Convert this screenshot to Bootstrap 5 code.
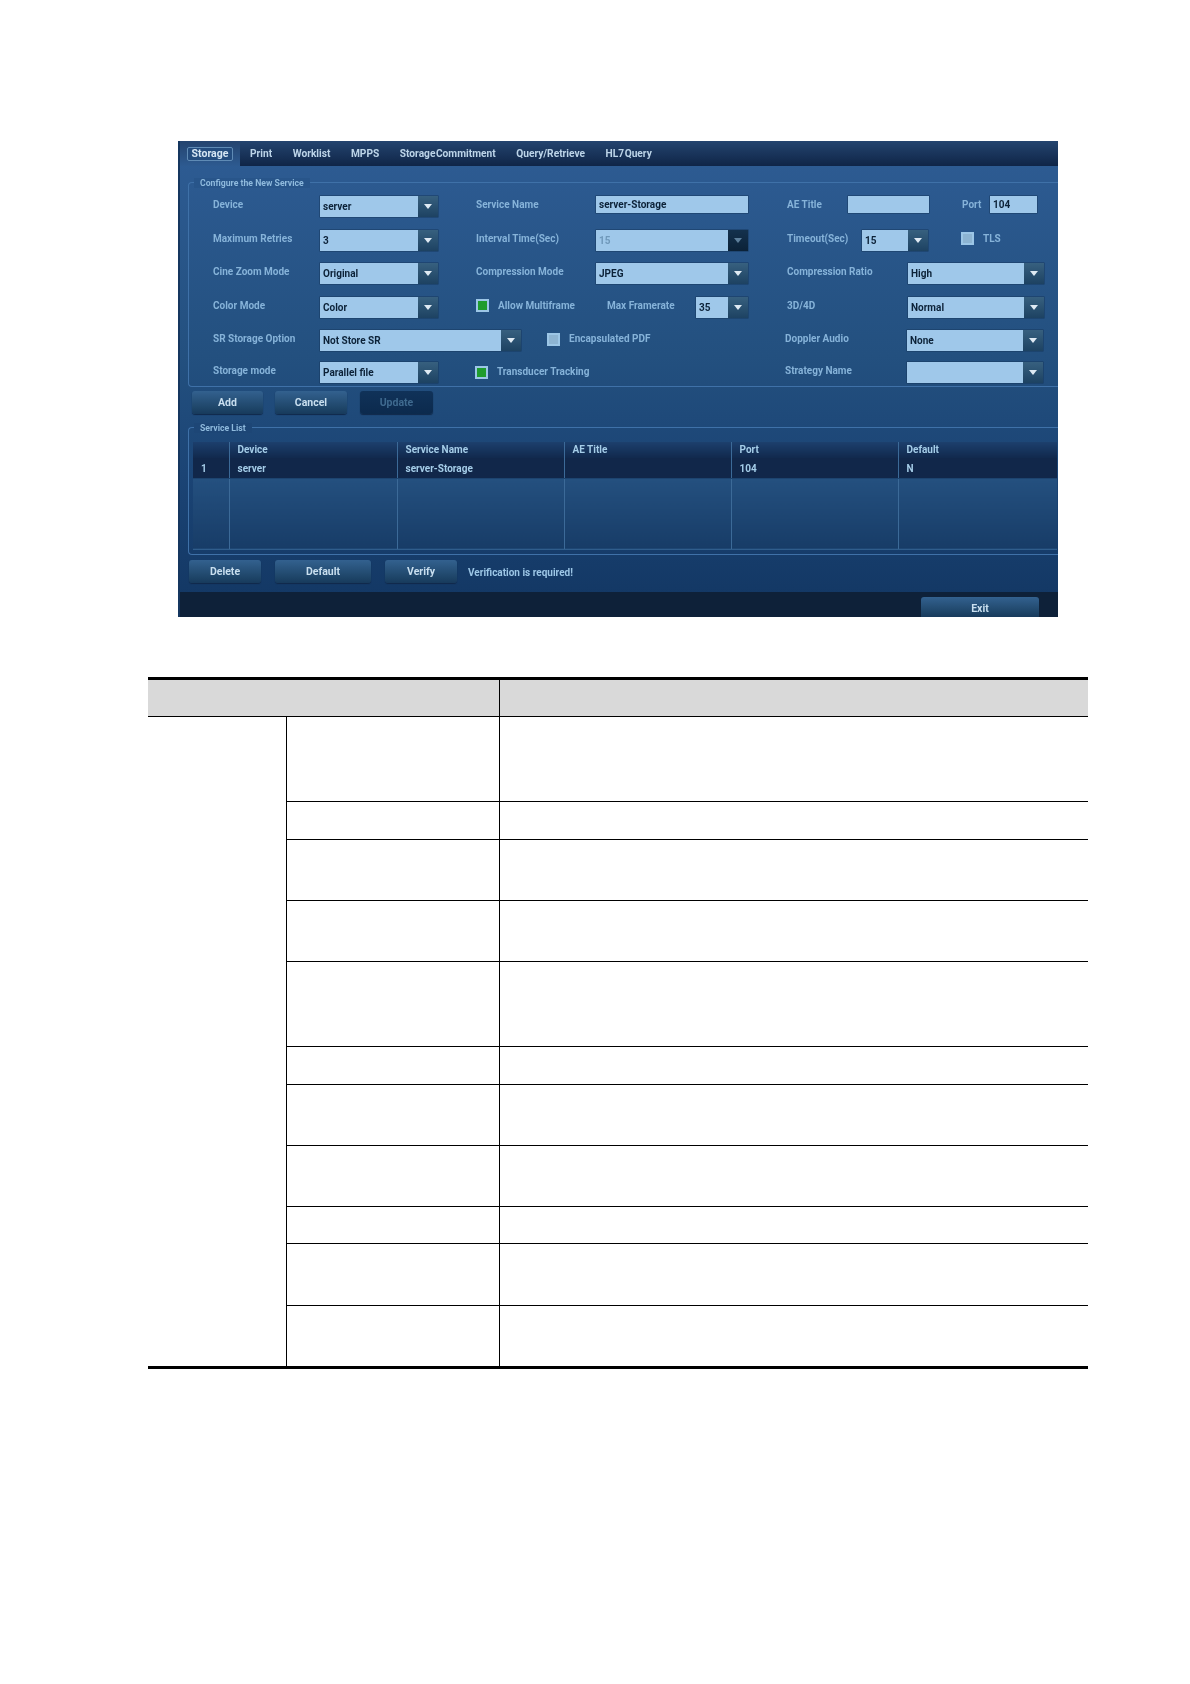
<!DOCTYPE html>
<html lang="en">
<head>
<meta charset="utf-8">
<title>Storage service settings</title>
<link rel="stylesheet" href="https://cdn.jsdelivr.net/npm/bootstrap@5.3.0/dist/css/bootstrap.min.css">
<style>
body{background:#fff;margin:0}
.sheet{padding-top:141px;padding-bottom:60px}
.scr{width:880px;height:476px;margin-left:178px;overflow:hidden;background:linear-gradient(#2e5c94 0,#23507f 45%,#1b4475 70%,#123662 100%);border-left:2px solid #15365f;font-family:"Roboto","Liberation Sans",sans-serif;font-weight:700;font-size:10px;color:#86b3d9;filter:blur(.45px);line-height:1.2}
.tabbar{height:25px;background:linear-gradient(#24446f,#0f2547);align-items:stretch}
.tabcell{width:60px;margin-right:10px;padding-left:7px;display:flex;align-items:center;background:linear-gradient(#24446f,#2d5a90)}
.tab-on{width:46px;height:14px;display:flex;align-items:center;justify-content:center;border:1px solid #5f8bb5;border-radius:2px;color:#d5e6f4;background:#234c7e;font-size:10.5px;padding-top:1px}
.tabtx{color:#bcd4e8;margin-right:20.5px;white-space:nowrap;font-size:10.2px;align-self:center;padding-top:2px;word-spacing:-2px;flex:none}
.gbox{position:relative;margin-left:8px;border:1px solid #3f71a8;border-right:0;border-radius:4px 0 0 4px}
.gbox-a{margin-top:16px;height:205px;padding:13px 0 0 24px}
.gbox-b{margin-top:13px;height:128px;padding:14px 0 0 4px}
.gtitle{position:absolute;top:-5px;left:5px;padding:0 6px;background:#28558a;font-size:8.7px;color:#8fbadd}
.gbox-b .gtitle{background:#1d4676}
.frow{height:21px;margin-bottom:12.5px;align-items:center}
.frow-last{margin-top:-1.5px;margin-bottom:0}
.lb{padding-bottom:3px;white-space:nowrap;flex:none}
.lb.tt{padding-bottom:1px}
.cmb{height:21px;background:#9fc8ea;color:#0c2238;flex:none;align-items:center;padding-left:3px;white-space:nowrap;box-shadow:0 0 0 .5px #16385f}
.cmb-tx{flex:1 1 auto;padding-top:1px}
.arr{width:20px;height:21px;flex:none;background:linear-gradient(#37607f,#1d4262);display:flex;align-items:center;justify-content:center}
.arr-off{background:linear-gradient(#14314d,#0b2238)}
.is-off{color:#6f98ba}
.ent{height:17px;align-self:flex-start}
.form-check-input.tick{width:13px;height:13px;margin:0 0 3px;flex:none;border-radius:0;border:2px solid #9cc6e6;background:#8db4d2;background-image:none}
.form-check-input.tick:checked{background:#1f9c2e;background-image:none;border-color:#9cc6e6}
.form-check-input.tick.gap37{margin:0 0 1px 37px}
.form-check-input.tick.gap38{margin-left:38px}
.w26{width:26px}.w33{width:33px}.w28{width:28px}.w47{width:47px}.w52{width:52px}.w61{width:61px}.w66{width:66px}.w75{width:75px}.w81{width:81px}.w89{width:89px}.w107{width:107px}.w118{width:118px}.w120{width:120px}.w121{width:121px}.w122{width:122px}.w136{width:136px}.w152{width:152px}.w201{width:201px}
.ml9{margin-left:9px}.ml38{margin-left:38px}.ml39{margin-left:39px}
.to607{width:109px}.to785a{width:216px}.to785b{width:288px}
.skbtn{padding:0;border:0;height:23px;border-radius:3px;font-size:10.5px;font-weight:700;line-height:22px;color:#c9dfef;background:linear-gradient(#33618f,#1e4568 75%,#173a5c);box-shadow:0 1px 1px #10294a}
.skbtn:disabled{opacity:1;background:linear-gradient(#103259,#0c2a4d);color:#3f6a8f;border:0}
.acts{margin:4px 0 0 12px;gap:12px}
.acts .skbtn:disabled{margin-left:1px}
.bw71{width:71px}.bw72{width:72px}.bw73{width:73px}.bw96{width:96px}.bw118{width:118px}
.cw36{width:36px}.cw168{width:168px}.cw167{width:167px}
.svc.table{--bs-table-bg:transparent;--bs-table-color:#a5cde8;--bs-table-border-color:transparent;margin:0;width:864px;table-layout:fixed;color:#a5cde8}
.svc.table>:not(caption)>*>*{padding:0 0 0 8px;border-bottom:0;border-right:1px solid #3c6a98;box-shadow:none;background:transparent;color:#a5cde8;font-size:10px;vertical-align:middle}
.svc.table>:not(caption)>*>*:last-child{border-right:0}
.svc.table thead th{height:16px;background:linear-gradient(#1c3f6d,#11294d);font-weight:700}
.svc.table tbody tr.sel td{height:20px;padding-top:2px;background:#11274a;border-bottom:1px solid #1d4470;font-weight:700}
.svc.table tbody tr.fill td{height:71px;background:linear-gradient(#24507f,#173c67);border-bottom:1px solid #2f5d8c}
.foot{margin:5px 0 0 9px;gap:14px;align-items:center}
.note{margin:2px 0 0 -3px;color:#9cc6e6}
.endbar{height:25px;margin-top:9px;background:#0e2139;padding:5px 19px 0 0;justify-content:flex-end}
.endbar .skbtn{height:20px;line-height:24px;display:block;border-radius:3px 3px 0 0;box-shadow:none}
.doc.table{width:940px;margin:60px 0 0 148px;table-layout:fixed;--bs-table-border-color:#000;border-top:3px solid #000;border-bottom:3px solid #000;border-collapse:collapse}
.doc.table>:not(caption)>*>*{padding:0;border-bottom:1px solid #000;border-left:0;border-right:0;box-shadow:none}
.doc.table thead th{background:#d9d9d9;height:38px}
.dc1{width:138px}.dc2{width:213px}
.doc.table .vl{border-right:1px solid #000}
.doc.table .ha{height:85px}.doc.table .hb{height:38px}.doc.table .hc{height:61px}.doc.table .hd{height:62px}.doc.table .he{height:37px}
.doc.table>tbody>tr:last-child>*{border-bottom:0}
</style>
</head>
<body>
<div class="sheet">
  <section class="scr">
    <div class="tabbar d-flex">
      <div class="tabcell"><span class="tab-on">Storage</span></div>
      <span class="tabtx">Print</span><span class="tabtx">Worklist</span><span class="tabtx">MPPS</span><span class="tabtx">Storage Commitment</span><span class="tabtx">Query/Retrieve</span><span class="tabtx">HL7 Query</span>
    </div>

    <div class="gbox gbox-a">
      <span class="gtitle">Configure the New Service</span>

      <div class="frow d-flex">
        <span class="lb w107">Device</span>
        <div class="cmb d-flex w118"><span class="cmb-tx">server</span><span class="arr"><svg width="8" height="5" viewBox="0 0 10 6"><path d="M0 0h10L5 6z" fill="#dfeaf3"/></svg></span></div>
        <span class="lb w120 ml38">Service Name</span>
        <div class="cmb d-flex w152 ent"><span class="cmb-tx">server-Storage</span></div>
        <span class="lb w61 ml39">AE Title</span>
        <div class="cmb d-flex w81 ent"></div>
        <span class="w33"></span>
        <span class="lb w28">Port</span>
        <div class="cmb d-flex w47 ent"><span class="cmb-tx">104</span></div>
      </div>

      <div class="frow d-flex">
        <span class="lb w107">Maximum Retries</span>
        <div class="cmb d-flex w118"><span class="cmb-tx">3</span><span class="arr"><svg width="8" height="5" viewBox="0 0 10 6"><path d="M0 0h10L5 6z" fill="#dfeaf3"/></svg></span></div>
        <span class="lb w120 ml38">Interval Time(Sec)</span>
        <div class="cmb d-flex w152 is-off"><span class="cmb-tx">15</span><span class="arr arr-off"><svg width="8" height="5" viewBox="0 0 10 6"><path d="M0 0h10L5 6z" fill="#5d7f9b"/></svg></span></div>
        <span class="lb w75 ml39">Timeout(Sec)</span>
        <div class="cmb d-flex w66"><span class="cmb-tx">15</span><span class="arr"><svg width="8" height="5" viewBox="0 0 10 6"><path d="M0 0h10L5 6z" fill="#dfeaf3"/></svg></span></div>
        <span class="w33"></span>
        <input class="form-check-input tick" type="checkbox" aria-label="TLS">
        <span class="lb ml9">TLS</span>
      </div>

      <div class="frow d-flex">
        <span class="lb w107">Cine Zoom Mode</span>
        <div class="cmb d-flex w118"><span class="cmb-tx">Original</span><span class="arr"><svg width="8" height="5" viewBox="0 0 10 6"><path d="M0 0h10L5 6z" fill="#dfeaf3"/></svg></span></div>
        <span class="lb w120 ml38">Compression Mode</span>
        <div class="cmb d-flex w152"><span class="cmb-tx">JPEG</span><span class="arr"><svg width="8" height="5" viewBox="0 0 10 6"><path d="M0 0h10L5 6z" fill="#dfeaf3"/></svg></span></div>
        <span class="lb w121 ml39">Compression Ratio</span>
        <div class="cmb d-flex w136"><span class="cmb-tx">High</span><span class="arr"><svg width="8" height="5" viewBox="0 0 10 6"><path d="M0 0h10L5 6z" fill="#dfeaf3"/></svg></span></div>
      </div>

      <div class="frow d-flex">
        <span class="lb w107">Color Mode</span>
        <div class="cmb d-flex w118"><span class="cmb-tx">Color</span><span class="arr"><svg width="8" height="5" viewBox="0 0 10 6"><path d="M0 0h10L5 6z" fill="#dfeaf3"/></svg></span></div>
        <input class="form-check-input tick gap38" type="checkbox" checked aria-label="Allow Multiframe">
        <span class="lb to607 ml9">Allow Multiframe</span>
        <span class="lb w89">Max Framerate</span>
        <div class="cmb d-flex w52"><span class="cmb-tx">35</span><span class="arr"><svg width="8" height="5" viewBox="0 0 10 6"><path d="M0 0h10L5 6z" fill="#dfeaf3"/></svg></span></div>
        <span class="lb w121 ml39">3D/4D</span>
        <div class="cmb d-flex w136"><span class="cmb-tx">Normal</span><span class="arr"><svg width="8" height="5" viewBox="0 0 10 6"><path d="M0 0h10L5 6z" fill="#dfeaf3"/></svg></span></div>
      </div>

      <div class="frow d-flex">
        <span class="lb w107">SR Storage Option</span>
        <div class="cmb d-flex w201"><span class="cmb-tx">Not Store SR</span><span class="arr"><svg width="8" height="5" viewBox="0 0 10 6"><path d="M0 0h10L5 6z" fill="#dfeaf3"/></svg></span></div>
        <span class="w26"></span>
        <input class="form-check-input tick" type="checkbox" aria-label="Encapsulated PDF">
        <span class="lb to785a ml9">Encapsulated PDF</span>
        <span class="lb w122">Doppler Audio</span>
        <div class="cmb d-flex w136"><span class="cmb-tx">None</span><span class="arr"><svg width="8" height="5" viewBox="0 0 10 6"><path d="M0 0h10L5 6z" fill="#dfeaf3"/></svg></span></div>
      </div>

      <div class="frow frow-last d-flex">
        <span class="lb w107">Storage mode</span>
        <div class="cmb d-flex w118"><span class="cmb-tx">Parallel file</span><span class="arr"><svg width="8" height="5" viewBox="0 0 10 6"><path d="M0 0h10L5 6z" fill="#dfeaf3"/></svg></span></div>
        <input class="form-check-input tick gap37" type="checkbox" checked aria-label="Transducer Tracking">
        <span class="lb tt to785b ml9">Transducer Tracking</span>
        <span class="lb w122">Strategy Name</span>
        <div class="cmb d-flex w136"><span class="cmb-tx"></span><span class="arr"><svg width="8" height="5" viewBox="0 0 10 6"><path d="M0 0h10L5 6z" fill="#dfeaf3"/></svg></span></div>
      </div>
    </div>

    <div class="acts d-flex">
      <button class="btn skbtn bw71" type="button">Add</button>
      <button class="btn skbtn bw72" type="button">Cancel</button>
      <button class="btn skbtn bw73" type="button" disabled>Update</button>
    </div>

    <div class="gbox gbox-b">
      <span class="gtitle">Service List</span>
      <table class="table svc">
        <colgroup><col class="cw36"><col class="cw168"><col class="cw167"><col class="cw167"><col class="cw167"><col></colgroup>
        <thead><tr><th></th><th>Device</th><th>Service Name</th><th>AE Title</th><th>Port</th><th>Default</th></tr></thead>
        <tbody>
          <tr class="sel"><td>1</td><td>server</td><td>server-Storage</td><td></td><td>104</td><td>N</td></tr>
          <tr class="fill"><td></td><td></td><td></td><td></td><td></td><td></td></tr>
        </tbody>
      </table>
    </div>

    <div class="foot d-flex">
      <button class="btn skbtn bw72" type="button">Delete</button>
      <button class="btn skbtn bw96" type="button">Default</button>
      <button class="btn skbtn bw72" type="button">Verify</button>
      <span class="note">Verification is required!</span>
    </div>

    <div class="endbar d-flex">
      <button class="btn skbtn bw118" type="button">Exit</button>
    </div>
  </section>

  <table class="table doc" aria-label="Parameter descriptions">
    <colgroup><col class="dc1"><col class="dc2"><col></colgroup>
    <thead><tr><th colspan="2" class="vl"></th><th></th></tr></thead>
    <tbody>
      <tr><td rowspan="11" class="vl"></td><td class="vl ha"></td><td></td></tr>
      <tr><td class="vl hb"></td><td></td></tr>
      <tr><td class="vl hc"></td><td></td></tr>
      <tr><td class="vl hc"></td><td></td></tr>
      <tr><td class="vl ha"></td><td></td></tr>
      <tr><td class="vl hb"></td><td></td></tr>
      <tr><td class="vl hc"></td><td></td></tr>
      <tr><td class="vl hc"></td><td></td></tr>
      <tr><td class="vl he"></td><td></td></tr>
      <tr><td class="vl hd"></td><td></td></tr>
      <tr><td class="vl hd"></td><td></td></tr>
    </tbody>
  </table>
</div>
<script src="https://cdn.jsdelivr.net/npm/bootstrap@5.3.0/dist/js/bootstrap.bundle.min.js"></script>
</body>
</html>
